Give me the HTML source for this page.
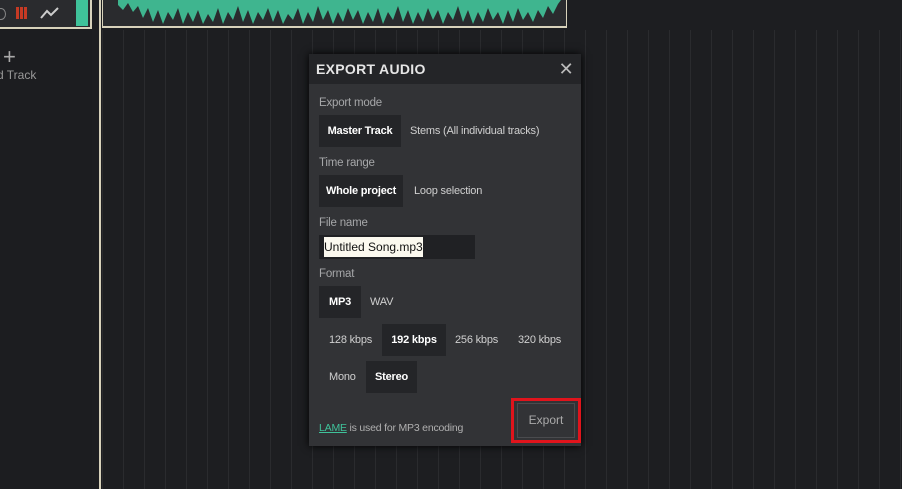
<!DOCTYPE html>
<html><head><style>
body{margin:0;width:902px;height:489px;background:#1d1e21;overflow:hidden;position:relative;font-family:"Liberation Sans",sans-serif;}
.grid{position:absolute;left:102px;top:30px;width:800px;height:459px;background:repeating-linear-gradient(90deg,#2a2b2e 0 1px,transparent 1px 21px);}
.left{position:absolute;left:0;top:0;width:92px;height:489px;background:#1c1d20;}
.d{position:absolute;left:309px;top:54px;width:272px;height:392px;background:#323336;box-shadow:0 0 8px #000;}
.hd{height:30px;background:#242528;color:#e6e6e6;font:bold 14px "Liberation Sans Narrow","Liberation Sans",sans-serif;letter-spacing:.3px;line-height:30px;padding-left:7px;position:relative;}
.lbl{position:absolute;left:10px;color:#a6a7a9;font-size:11.5px;letter-spacing:-.2px;}
.b{position:absolute;font-size:11px;letter-spacing:-.2px;color:#d0d0d0;height:32px;line-height:32px;text-align:center;white-space:nowrap;}
.s{background:#242528;color:#fff;font-weight:bold;}
</style></head><body>
<div class="left">
<div style="position:absolute;left:0;top:0;width:90px;height:27px;background:#2a2b2e;border-right:2px solid #d8d2bb;border-bottom:2px solid #d8d2bb"></div>
<div style="position:absolute;left:76px;top:0;width:12px;height:26px;background:#3fc29a"></div>
<div style="position:absolute;left:16px;top:7px;width:3px;height:12px;background:#c63a24;box-shadow:4px 0 0 #c63a24,8px 0 0 #c63a24"></div>
<div style="position:absolute;left:-4px;top:8px;width:8px;height:10px;border-radius:50%;border:1px solid #888"></div>
<svg style="position:absolute;left:40px;top:6px" width="20" height="14"><path d="M1 12 L7 5 L11 9 L18 2" stroke="#ccc" stroke-width="2" fill="none"/></svg>
<div style="position:absolute;left:3px;top:44px;color:#aaa;font-size:22px;font-weight:200">+</div>
<div style="position:absolute;left:-3px;top:68px;color:#999;font-size:12px">d Track</div>
</div>
<div style="position:absolute;left:99px;top:0;width:2px;height:489px;background:#d8d2bb"></div>
<div class="grid"></div>
<div style="position:absolute;left:102px;top:0;width:463px;height:26px;background:#2a2b2e;border:1px solid #d8d2bb;border-top:none;border-bottom-width:2px;overflow:hidden">
<svg width="463" height="26"><path d="M15 0 L15 5 L20 10 L25 3 L30 12 L35 6 L40 18 L45 8 L50 22 L55 10 L60 24 L65 12 L70 20 L75 8 L80 24 L85 12 L90 22 L95 10 L100 24 L105 14 L110 22 L115 8 L120 24 L125 12 L130 20 L135 6 L140 22 L145 10 L150 24 L155 12 L160 20 L165 8 L170 22 L175 10 L180 24 L185 14 L190 20 L195 8 L200 24 L205 12 L210 22 L215 6 L220 20 L225 10 L230 24 L235 12 L240 22 L245 8 L250 20 L255 10 L260 24 L265 12 L270 22 L275 8 L280 24 L285 12 L290 20 L295 6 L300 22 L305 10 L310 24 L315 12 L320 22 L325 8 L330 20 L335 10 L340 24 L345 12 L350 20 L355 6 L360 22 L365 10 L370 24 L375 12 L380 22 L385 8 L390 20 L395 12 L400 24 L405 10 L410 22 L415 8 L420 20 L425 12 L430 22 L435 10 L440 18 L445 6 L450 14 L455 4 L458 0 Z" fill="#3fb58f"/></svg></div>
<div class="d">
<div class="hd">EXPORT AUDIO<span style="position:absolute;right:7px;top:0;font-weight:normal;font-size:18px;color:#bbb">✕</span></div>
<div class="lbl" style="top:43px">Export mode</div>
<div class="b s" style="left:10px;top:61px;width:82px">Master Track</div>
<div class="b" style="left:101px;top:61px">Stems (All individual tracks)</div>
<div class="lbl" style="top:103px">Time range</div>
<div class="b s" style="left:10px;top:121px;width:84px">Whole project</div>
<div class="b" style="left:105px;top:121px">Loop selection</div>
<div class="lbl" style="top:163px">File name</div>
<div style="position:absolute;left:10px;top:181px;width:156px;height:24px;background:#202124"></div>
<div style="position:absolute;left:15px;top:183px;width:99px;height:20px;background:#fbf9ef;color:#111;font-size:12px;line-height:20px;white-space:nowrap;overflow:hidden">Untitled Song.mp3</div>
<div class="lbl" style="top:214px">Format</div>
<div class="b s" style="left:10px;top:232px;width:42px">MP3</div>
<div class="b" style="left:61px;top:232px">WAV</div>
<div class="b" style="left:20px;top:270px">128 kbps</div>
<div class="b s" style="left:73px;top:270px;width:64px">192 kbps</div>
<div class="b" style="left:146px;top:270px">256 kbps</div>
<div class="b" style="left:209px;top:270px">320 kbps</div>
<div class="b" style="left:20px;top:307px">Mono</div>
<div class="b s" style="left:57px;top:307px;width:51px">Stereo</div>
<div style="position:absolute;left:10px;top:368px;font-size:10.5px;letter-spacing:-.2px;color:#b0b0b0"><span style="color:#3fc29a;text-decoration:underline">LAME</span> is used for MP3 encoding</div>
<div style="position:absolute;left:202px;top:344px;width:70px;height:45px;border:3px solid #e0141c;box-sizing:border-box"></div>
<div style="position:absolute;left:208px;top:349px;width:58px;height:35px;border:1px solid #4a4b4e;box-sizing:border-box;color:#aaa;font-size:12px;line-height:33px;text-align:center">Export</div>
</div>
</body></html>
